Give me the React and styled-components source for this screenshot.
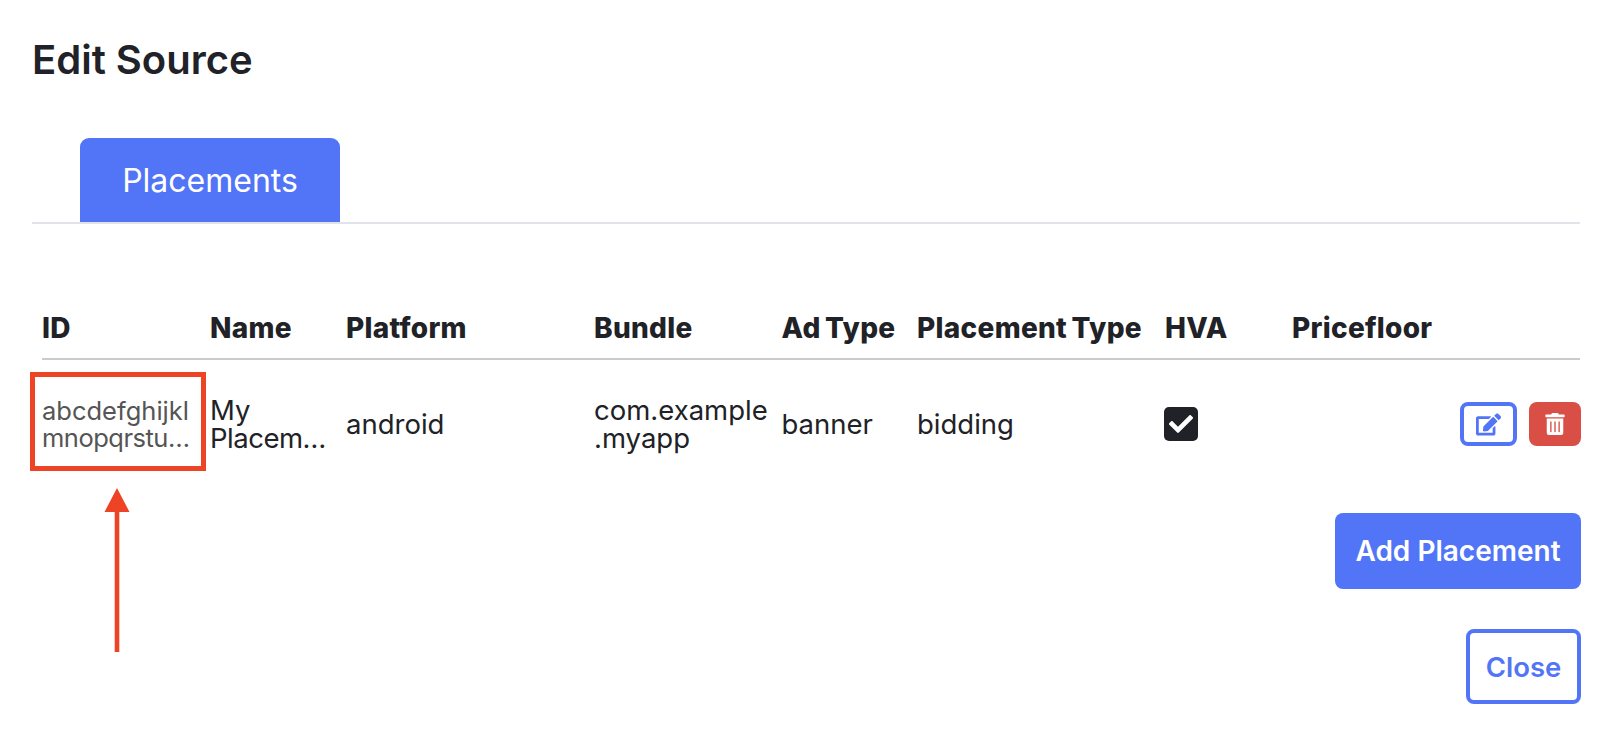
import React from "react";
import styled, { createGlobalStyle } from "styled-components";
import { FaEdit, FaTrashAlt, FaCheck } from "react-icons/fa";

const Global = createGlobalStyle`
  html, body { margin: 0; padding: 0; background: #fff; }
  body { font-family: Inter, "Liberation Sans", sans-serif; color: #212227; }
`;
const Page = styled.div`
  width: 1608px; height: 732px; box-sizing: border-box; overflow: hidden; position: relative;
  padding: 36px 28px 0 32px; display: flex; flex-direction: column;
`;
const Title = styled.h1`
  margin: 0; font-size: 40px; line-height: 47px; font-weight: 600;
`;
const Tabs = styled.div`
  margin-top: 55px; height: 86px; box-sizing: border-box; border-bottom: 2px solid #e2e3e8;
  padding-left: 48px; display: flex; align-items: flex-end;
`;
const Tab = styled.div`
  width: 260px; height: 84px; background: #5275f8; color: #fff; border-radius: 9px 9px 0 0;
  display: flex; align-items: center; justify-content: center; font-size: 32px; font-weight: 400;
`;
const Table = styled.div`margin: 87px 0 0 10px; display: flex; flex-direction: column;`;
const Columns = `display: grid; grid-template-columns: 168px 136px 248px 187.5px 135.5px 248px 127px 145px 1fr;`;
const Head = styled.div`
  ${Columns} height: 49px; align-items: start; border-bottom: 2px solid #cbcbcd; box-sizing: border-box;
`;
const Th = styled.div`font-size: 28px; line-height: 35px; font-weight: 800; white-space: nowrap; letter-spacing: 0.3px; word-spacing: -2px;`;
const Row = styled.div`${Columns} height: 128px; align-items: center;`;
const Td = styled.div`font-size: 27.5px; line-height: 28px;`;
const IdCell = styled.div`font-size: 25.5px; line-height: 27px; color: #555; position: relative;`;
const Clipped = styled.span`letter-spacing: -0.5px;`;
const Highlight = styled.div`
  position: absolute; left: -12px; top: -25px; width: 176px; height: 99px;
  border: 5px solid #ee4426; box-sizing: border-box;
`;
const Check = styled.div`
  width: 34px; height: 34px; margin-left: -1px; background: #212227; border-radius: 5px; color: #fff;
  display: flex; align-items: center; justify-content: center; font-size: 24px;
`;
const Actions = styled.div`display: flex; justify-content: flex-end; gap: 12px; margin-right: -1px;`;
const IconButton = styled.div`
  width: ${p => p.$wide}px; height: 44px; box-sizing: border-box; border-radius: 8px; display: flex;
  align-items: center; justify-content: center; font-size: ${p => p.$danger ? 22 : 25}px;
  background: ${p => p.$danger ? "#da4f45" : "#fff"}; color: ${p => p.$danger ? "#fff" : "#5275f8"};
  border: ${p => p.$danger ? "none" : "4px solid #5275f8"};
`;
const Footer = styled.div`display: flex; flex-direction: column; align-items: flex-end; margin: 25px -1px 0 0;`;
const Primary = styled.div`
  width: 246px; height: 76px; background: #5275f8; color: #fff; border-radius: 8px; font-size: 28px; font-weight: 600;
  display: flex; align-items: center; justify-content: center;
`;
const Secondary = styled.div`
  margin-top: 40px; width: 115px; height: 75px; box-sizing: border-box; border: 4px solid #5275f8; border-radius: 8px;
  color: #5275f8; font-size: 27.5px; font-weight: 600; display: flex; align-items: center; justify-content: center;
`;
const Arrow = styled.svg`position: absolute; left: 104px; top: 488px; width: 26px; height: 164px;`;

export default function App() {
  return (
    <Page>
      <Global />
      <Title>Edit Source</Title>
      <Tabs><Tab>Placements</Tab></Tabs>
      <Table>
        <Head>
          {["ID","Name","Platform","Bundle","Ad Type","Placement Type","HVA","Pricefloor",""].map((h,i)=><Th key={i}>{h}</Th>)}
        </Head>
        <Row>
          <IdCell><Highlight />abcdefghijkl<br/><Clipped>mnopqrstu…</Clipped></IdCell>
          <Td>My<br/><Clipped>Placem…</Clipped></Td>
          <Td>android</Td>
          <Td>com.example<br/>.myapp</Td>
          <Td>banner</Td>
          <Td>bidding</Td>
          <Td><Check><FaCheck /></Check></Td>
          <Td />
          <Actions>
            <IconButton $wide={57}><FaEdit /></IconButton>
            <IconButton $wide={52} $danger><FaTrashAlt /></IconButton>
          </Actions>
        </Row>
      </Table>
      <Footer>
        <Primary>Add Placement</Primary>
        <Secondary>Close</Secondary>
      </Footer>
      <Arrow viewBox="0 0 26 164">
        <path d="M13 0 L25.5 24 L0.5 24 Z" fill="#ee4426" />
        <rect x="10.7" y="22" width="4.6" height="142" fill="#ee4426" />
      </Arrow>
    </Page>
  );
}
